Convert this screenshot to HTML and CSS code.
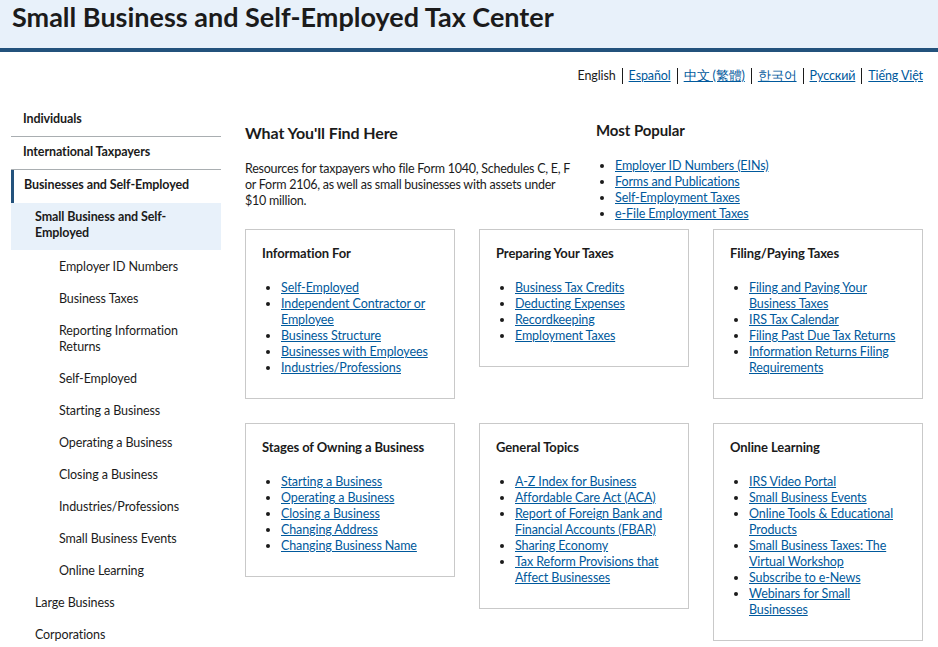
FILE: index.html
```html
<!DOCTYPE html>
<html lang="en">
<head>
<meta charset="utf-8">
<title>Small Business and Self-Employed Tax Center</title>
<link rel="stylesheet" href="styles.css">
</head>
<body>
<header class="page-header">
  <h1 class="page-title">Small Business and Self-Employed Tax Center</h1>
</header>

<nav class="lang-bar">
  <span class="lang current">English</span>
  <a class="lang" href="#">Español</a>
  <a class="lang" href="#">中文 (繁體)</a>
  <a class="lang" href="#">한국어</a>
  <a class="lang" href="#">Русский</a>
  <a class="lang" href="#">Tiếng Việt</a>
</nav>

<div class="layout">
  <aside class="sidenav">
    <a class="nav-top first" href="#">Individuals</a>
    <a class="nav-top" href="#">International Taxpayers</a>
    <a class="nav-top active" href="#">Businesses and Self-Employed</a>
    <a class="nav-sub current" href="#">Small Business and Self-Employed</a>
    <a class="nav-subsub" href="#">Employer ID Numbers</a>
    <a class="nav-subsub" href="#">Business Taxes</a>
    <a class="nav-subsub" href="#">Reporting Information Returns</a>
    <a class="nav-subsub" href="#">Self-Employed</a>
    <a class="nav-subsub" href="#">Starting a Business</a>
    <a class="nav-subsub" href="#">Operating a Business</a>
    <a class="nav-subsub" href="#">Closing a Business</a>
    <a class="nav-subsub" href="#">Industries/Professions</a>
    <a class="nav-subsub" href="#">Small Business Events</a>
    <a class="nav-subsub" href="#">Online Learning</a>
    <a class="nav-sub" href="#">Large Business</a>
    <a class="nav-sub" href="#">Corporations</a>
  </aside>

  <main class="main">
    <section class="intro">
      <div class="intro-col">
        <h2 class="intro-title">What You'll Find Here</h2>
        <p class="intro-text">Resources for taxpayers who file Form 1040, Schedules C, E, F or Form 2106, as well as small businesses with assets under $10 million.</p>
      </div>
      <div class="intro-col">
        <h2 class="popular-title">Most Popular</h2>
        <ul class="link-list">
          <li><a href="#">Employer ID Numbers (EINs)</a></li>
          <li><a href="#">Forms and Publications</a></li>
          <li><a href="#">Self-Employment Taxes</a></li>
          <li><a href="#">e-File Employment Taxes</a></li>
        </ul>
      </div>
    </section>

    <section class="cards">
      <div class="card">
        <h3 class="card-title">Information For</h3>
        <ul class="link-list">
          <li><a href="#">Self-Employed</a></li>
          <li><a href="#">Independent Contractor or Employee</a></li>
          <li><a href="#">Business Structure</a></li>
          <li><a href="#">Businesses with Employees</a></li>
          <li><a href="#">Industries/Professions</a></li>
        </ul>
      </div>
      <div class="card">
        <h3 class="card-title">Preparing Your Taxes</h3>
        <ul class="link-list">
          <li><a href="#">Business Tax Credits</a></li>
          <li><a href="#">Deducting Expenses</a></li>
          <li><a href="#">Recordkeeping</a></li>
          <li><a href="#">Employment Taxes</a></li>
        </ul>
      </div>
      <div class="card">
        <h3 class="card-title">Filing/Paying Taxes</h3>
        <ul class="link-list">
          <li><a href="#">Filing and Paying Your Business Taxes</a></li>
          <li><a href="#">IRS Tax Calendar</a></li>
          <li><a href="#">Filing Past Due Tax Returns</a></li>
          <li><a href="#">Information Returns Filing Requirements</a></li>
        </ul>
      </div>
      <div class="card">
        <h3 class="card-title">Stages of Owning a Business</h3>
        <ul class="link-list">
          <li><a href="#">Starting a Business</a></li>
          <li><a href="#">Operating a Business</a></li>
          <li><a href="#">Closing a Business</a></li>
          <li><a href="#">Changing Address</a></li>
          <li><a href="#">Changing Business Name</a></li>
        </ul>
      </div>
      <div class="card">
        <h3 class="card-title">General Topics</h3>
        <ul class="link-list">
          <li><a href="#">A-Z Index for Business</a></li>
          <li><a href="#">Affordable Care Act (ACA)</a></li>
          <li><a href="#">Report of Foreign Bank and Financial Accounts (FBAR)</a></li>
          <li><a href="#">Sharing Economy</a></li>
          <li><a href="#">Tax Reform Provisions that Affect Businesses</a></li>
        </ul>
      </div>
      <div class="card">
        <h3 class="card-title">Online Learning</h3>
        <ul class="link-list">
          <li><a href="#">IRS Video Portal</a></li>
          <li><a href="#">Small Business Events</a></li>
          <li><a href="#">Online Tools &amp; Educational Products</a></li>
          <li><a href="#">Small Business Taxes: The Virtual Workshop</a></li>
          <li><a href="#">Subscribe to e-News</a></li>
          <li><a href="#">Webinars for Small Businesses</a></li>
        </ul>
      </div>
    </section>
  </main>
</div>
</body>
</html>
```
FILE: styles.css
```css
* { box-sizing: border-box; }

body {
  margin: 0;
  font-family: "Lato", "Noto Sans", sans-serif;
  font-size: 12.5px;
  letter-spacing: -0.1px;
  line-height: 16px;
  color: #1b1b1b;
  background: #fff;
}

a { color: #00599c; }

.page-header {
  background: #e8f1fa;
  border-bottom: 4px solid #23527c;
  height: 52px;
  padding: 0 12px;
}

.page-title {
  margin: 0;
  font-size: 27px;
  line-height: 34px;
  font-weight: 700;
  letter-spacing: 0;
  color: #1b1b1b;
}

.lang-bar {
  display: flex;
  justify-content: flex-end;
  padding: 16px 15px 0 0;
  height: 51px;
}

.lang {
  padding: 0 6px;
  border-left: 1px solid #1b1b1b;
  line-height: 16px;
  height: 16px;
}
.lang:first-child { border-left: 0; }
.lang:last-child { padding-right: 0; }
.lang.current { color: #1b1b1b; }

.layout {
  display: flex;
  gap: 24px;
  padding: 0 15px 0 11px;
}

.sidenav {
  width: 210px;
  flex: none;
  display: flex;
  flex-direction: column;
}

.sidenav a {
  color: #1b1b1b;
  text-decoration: none;
  display: block;
  padding: 8px 12px;
}

.sidenav .nav-top {
  font-weight: 700;
  border-bottom: 1px solid #a9aeb1;
  padding: 7px 12px 9px 12px;
}
.sidenav .nav-top.first { padding-top: 8px; }

.sidenav .nav-top.active {
  border-bottom: 0;
  border-left: 3px solid #23527c;
  padding: 7px 12px 10px 10px;
}

.sidenav .nav-sub { padding: 9px 12px 7px 24px; }
.sidenav .nav-sub.current {
  background: #e8f1fa;
  font-weight: 700;
  padding: 6px 40px 9px 24px;
}
.sidenav .nav-subsub { padding: 9px 20px 7px 48px; }

.main {
  width: 678px;
  flex: none;
}

.intro {
  display: grid;
  grid-template-columns: 1fr 1fr;
  gap: 24px;
  height: 126px;
}

.intro-title {
  margin: 20px 0 0;
  font-size: 16px;
  line-height: 20px;
}

.intro-text {
  margin: 18px 0 0;
  letter-spacing: -0.25px;
}

.popular-title {
  margin: 17px 0 0;
  font-size: 15px;
  line-height: 20px;
}

.link-list {
  margin: 18px 0 0;
  padding-left: 19px;
}

.cards {
  display: grid;
  grid-template-columns: repeat(3, 210px);
  gap: 24px;
  align-items: start;
}

.card {
  border: 1px solid #c9c9c9;
  padding: 15px 16px 22px;
}

.card-title {
  margin: 0;
  font-size: 13px;
  line-height: 16px;
  font-weight: 700;
}

.card .link-list { margin-top: 19px; margin-bottom: 0; }
```
